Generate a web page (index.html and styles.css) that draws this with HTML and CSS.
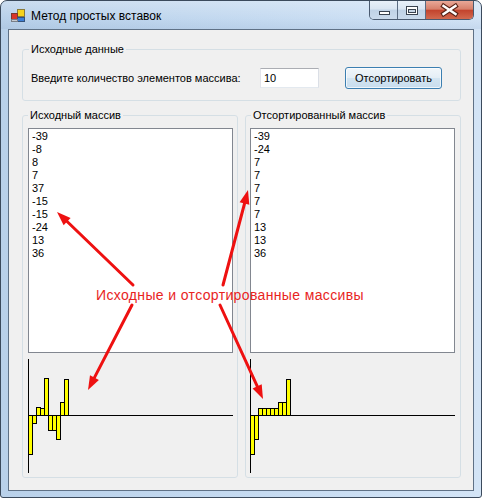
FILE: index.html
```html
<!DOCTYPE html>
<html lang="ru">
<head>
<meta charset="utf-8">
<title>Метод простых вставок</title>
<link rel="stylesheet" href="styles.css">
</head>
<body>
<div class="window">
  <div class="titlebar">
    <svg class="appicon" viewBox="0 0 16 16" width="16" height="16">
      <rect x="7.5" y="1.5" width="7" height="7" fill="#f6d21a" stroke="#8a7a3a"/>
      <rect x="1.5" y="5.5" width="6" height="6" fill="#d8362a" stroke="#7a3a30"/>
      <rect x="7.5" y="9.5" width="7" height="4" fill="#3d7fd6" stroke="#34527a"/>
      <rect x="1.5" y="11.5" width="6" height="2" fill="#c9ccd2" stroke="#7a7f88"/>
    </svg>
    <span class="title">Метод простых вставок</span>
    <div class="caption">
      <div class="cbtn min">
        <svg viewBox="0 0 28 18" width="28" height="18"><rect x="9.5" y="10.5" width="10" height="3" fill="#fff" stroke="#3a4350"/></svg>
      </div>
      <div class="cbtn max">
        <svg viewBox="0 0 28 18" width="28" height="18"><rect x="8.5" y="5.5" width="11" height="8" fill="#fff" stroke="#3a4350"/><rect x="10.5" y="8.5" width="7" height="3" fill="#c8d6e6" stroke="#3a4350"/></svg>
      </div>
      <div class="cbtn close">
        <svg viewBox="0 0 47 18" width="47" height="18"><path d="M17.5 5 L29.5 13 M29.5 5 L17.5 13" stroke="#5b2418" stroke-width="4.6" stroke-linecap="square"/><path d="M17.5 5 L29.5 13 M29.5 5 L17.5 13" stroke="#fff" stroke-width="2.4" stroke-linecap="square"/></svg>
      </div>
    </div>
  </div>
  <div class="client">
    <fieldset class="group input-group">
      <legend>Исходные данные</legend>
      <div class="row">
        <span class="lbl">Введите количество элементов массива:</span>
        <div class="textbox">10</div>
        <button class="btn" type="button">Отсортировать</button>
      </div>
    </fieldset>
    <div class="arrays">
      <fieldset class="group arr left">
        <legend>Исходный массив</legend>
        <div class="listbox">
          <div>-39</div><div>-8</div><div>8</div><div>7</div><div>37</div><div>-15</div><div>-15</div><div>-24</div><div>13</div><div>36</div>
        </div>
        <svg class="chart" viewBox="0 0 205 114" width="205" height="114">
          <line x1="0.5" y1="0" x2="0.5" y2="114" stroke="#000"/>
          <line x1="0" y1="56.5" x2="205" y2="56.5" stroke="#000"/>
          <g fill="#ffff00" stroke="#000">
            <rect x="0.5" y="56.5" width="4" height="39"/>
            <rect x="4.5" y="56.5" width="4" height="8"/>
            <rect x="8.5" y="48.5" width="4" height="8"/>
            <rect x="12.5" y="49.5" width="4" height="7"/>
            <rect x="16.5" y="19.5" width="4" height="37"/>
            <rect x="20.5" y="56.5" width="4" height="15"/>
            <rect x="24.5" y="56.5" width="4" height="15"/>
            <rect x="28.5" y="56.5" width="4" height="24"/>
            <rect x="32.5" y="43.5" width="4" height="13"/>
            <rect x="36.5" y="20.5" width="4" height="36"/>
          </g>
        </svg>
      </fieldset>
      <fieldset class="group arr right">
        <legend>Отсортированный массив</legend>
        <div class="listbox">
          <div>-39</div><div>-24</div><div>7</div><div>7</div><div>7</div><div>7</div><div>7</div><div>13</div><div>13</div><div>36</div>
        </div>
        <svg class="chart" viewBox="0 0 205 114" width="205" height="114">
          <line x1="0.5" y1="0" x2="0.5" y2="114" stroke="#000"/>
          <line x1="0" y1="56.5" x2="205" y2="56.5" stroke="#000"/>
          <g fill="#ffff00" stroke="#000">
            <rect x="0.5" y="56.5" width="4" height="39"/>
            <rect x="4.5" y="56.5" width="4" height="24"/>
            <rect x="8.5" y="49.5" width="4" height="7"/>
            <rect x="12.5" y="49.5" width="4" height="7"/>
            <rect x="16.5" y="49.5" width="4" height="7"/>
            <rect x="20.5" y="49.5" width="4" height="7"/>
            <rect x="24.5" y="49.5" width="4" height="7"/>
            <rect x="28.5" y="43.5" width="4" height="13"/>
            <rect x="32.5" y="43.5" width="4" height="13"/>
            <rect x="36.5" y="20.5" width="4" height="36"/>
          </g>
        </svg>
      </fieldset>
    </div>
  </div>
  <div class="annot">Исходные и отсортированные массивы</div>
  <svg class="arrows" viewBox="0 0 482 498" width="482" height="498">
    <g stroke="#ee1111" stroke-width="3" stroke-linecap="round">
      <line x1="133" y1="285" x2="64" y2="218.5"/>
      <line x1="223" y1="285" x2="246" y2="198"/>
      <line x1="132" y1="305" x2="91.7" y2="382.9"/>
      <line x1="220" y1="305" x2="259.7" y2="391.7"/>
    </g>
    <g fill="#ee1111">
      <polygon points="57,212 70.6,218.1 63.6,225.3"/>
      <polygon points="248,190 249.3,204.8 239.6,202.3"/>
      <polygon points="88,390 90,375.3 98.9,379.9"/>
      <polygon points="263,399 252.6,388.4 261.7,384.2"/>
    </g>
  </svg>
</div>
</body>
</html>
```

FILE: styles.css
```css
html, body {
  margin: 0;
  padding: 0;
  background: #ffffff;
}

.window {
  position: relative;
  width: 482px;
  height: 498px;
  box-sizing: border-box;
  border: 1px solid #3b4a5c;
  border-radius: 7px 7px 3px 3px;
  background: linear-gradient(to right, #b9d1ea 0%, #c6dbf1 55%, #d3e4f6 100%);
  font-family: "Liberation Sans", Arial, sans-serif;
  font-size: 11px;
  color: #000;
  overflow: hidden;
  display: flex;
  flex-direction: column;
}

.titlebar {
  height: 28px;
  flex: none;
  display: flex;
  align-items: flex-start;
  background: linear-gradient(to bottom, rgba(255,255,255,0.25), rgba(255,255,255,0) 60%, rgba(120,150,190,0.15));
}

.appicon {
  margin: 7px 0 0 9px;
  flex: none;
}

.title {
  margin: 7px 0 0 5px;
  font-size: 12px;
  line-height: 16px;
}

.caption {
  margin-left: auto;
  margin-right: 7px;
  display: flex;
  border: 1px solid #4a5a70;
  border-top: none;
  border-radius: 0 0 5px 5px;
  overflow: hidden;
}

.cbtn {
  height: 18px;
}

.cbtn svg {
  display: block;
}

.cbtn.min,
.cbtn.max {
  width: 27px;
  border-right: 1px solid #5a6b82;
  background: linear-gradient(to bottom, #e8f0f9 0%, #d9e5f2 45%, #c0d2e6 50%, #cadaec 100%);
}

.cbtn.close {
  width: 47px;
  background: linear-gradient(to bottom, #e9a898 0%, #d7806b 45%, #c3442e 52%, #d2694f 100%);
}

.client {
  flex: none;
  margin: 0 7px;
  height: 462px;
  box-sizing: border-box;
  border: 1px solid #5f7186;
  background: #f0f0f0;
  padding: 0 12px 0 13px;
}

.group {
  margin: 0;
  border: 1px solid #d5dfe5;
  border-radius: 3px;
  min-width: 0;
}

.group legend {
  padding: 0 2px;
  font-size: 11px;
  line-height: 13px;
}

.input-group {
  margin-top: 13px;
  padding: 11px 12px 11px 8px;
}

.input-group legend {
  margin-left: -2px;
}

.row {
  display: flex;
  align-items: center;
  height: 22px;
}

.lbl {
  width: 229px;
  flex: none;
  line-height: 13px;
}

.textbox {
  width: 59px;
  height: 20px;
  flex: none;
  box-sizing: border-box;
  border: 1px solid;
  border-color: #abadb3 #dbdfe6 #e3e9ef #e2e3ea;
  background: #fff;
  padding: 3px 0 0 3px;
  line-height: 13px;
}

.btn {
  margin-left: 26px;
  width: 97px;
  height: 22px;
  flex: none;
  padding: 0;
  border: 1px solid #3c7fb1;
  border-radius: 3px;
  background: linear-gradient(to bottom, #f1f6fa 0%, #e4eef6 48%, #d2e4f1 52%, #c8ddee 100%);
  box-shadow: inset 0 0 0 1px rgba(255,255,255,0.7);
  font-family: "Liberation Sans", Arial, sans-serif;
  font-size: 11px;
  color: #000;
}

.arrays {
  display: flex;
  gap: 7px;
  margin-top: 8px;
}

.arr {
  width: 216px;
  box-sizing: border-box;
  padding: 6px 4px 4px 5px;
}

.arr.right {
  padding: 6px 5px 4px 4px;
}

.arr.right legend {
  margin-left: 1px;
}

.listbox {
  height: 225px;
  box-sizing: border-box;
  border: 1px solid #828790;
  background: #fff;
  padding: 1px 3px;
  line-height: 13px;
  font-size: 11px;
}

.chart {
  display: block;
  margin-top: 6px;
}

.annot {
  position: absolute;
  left: 95px;
  top: 286px;
  color: #e8241e;
  font-size: 14px;
  line-height: 16px;
  letter-spacing: 0.36px;
  white-space: nowrap;
}

.arrows {
  position: absolute;
  left: -1px;
  top: -1px;
  pointer-events: none;
}
```
